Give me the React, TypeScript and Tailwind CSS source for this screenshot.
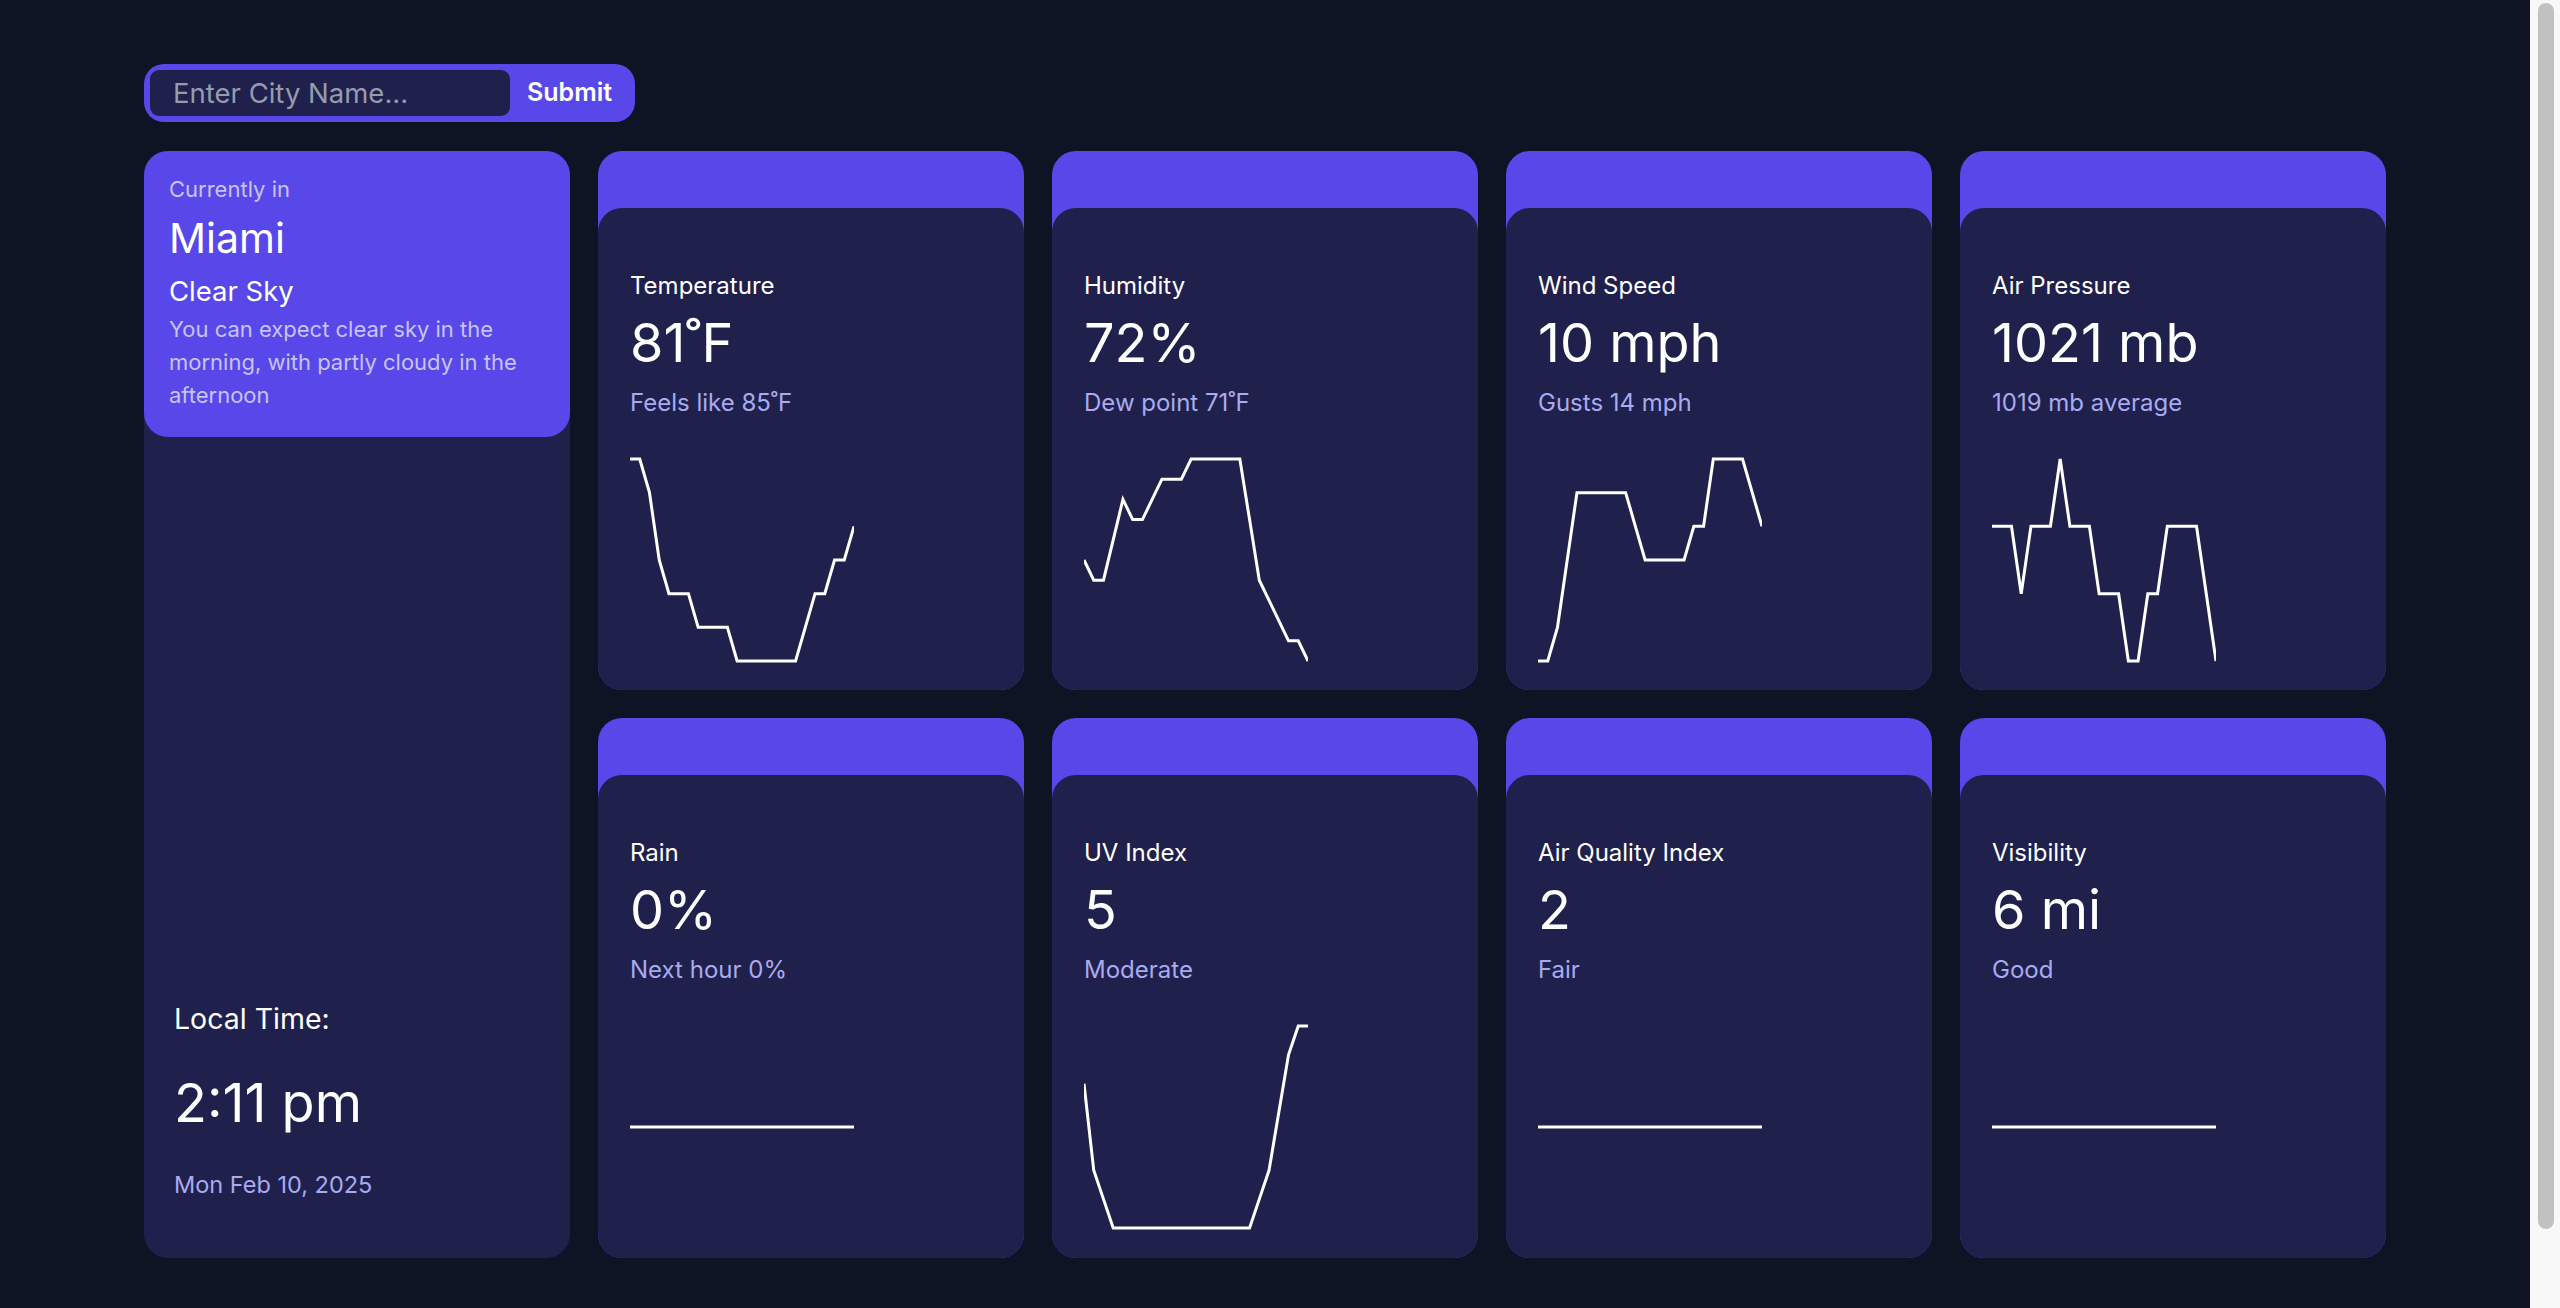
import React from "react";

const temp = [81, 81, 80, 78, 77, 77, 77, 76, 76, 76, 76, 75, 75, 75, 75, 75, 75, 75, 76, 77, 77, 78, 78, 79];
const hum = [67, 66, 66, 68, 70, 69, 69, 70, 71, 71, 71, 72, 72, 72, 72, 72, 72, 69, 66, 65, 64, 63, 63, 62];
const wind = [4, 4, 5, 7, 9, 9, 9, 9, 9, 9, 8, 7, 7, 7, 7, 7, 8, 8, 10, 10, 10, 10, 9, 8];
const pres = [1021, 1021, 1021, 1020, 1021, 1021, 1021, 1022, 1021, 1021, 1021, 1020, 1020, 1020, 1019, 1019, 1020, 1020, 1021, 1021, 1021, 1021, 1020, 1019];
const uv = [5, 2, 1, 0, 0, 0, 0, 0, 0, 0, 0, 0, 0, 0, 0, 0, 0, 0, 1, 2, 4, 6, 7, 7];
const flat = new Array(24).fill(0);

function Chart({ data }: { data: number[] }) {
  const W = 224;
  const H = 208;
  const pad = 3;
  const R = 202;
  const min = Math.min(...data);
  const max = Math.max(...data);
  const pts = data
    .map((v, i) => {
      const x = (i * W) / (data.length - 1);
      const y = max === min ? pad + R / 2 : pad + ((max - v) / (max - min)) * R;
      return `${x.toFixed(2)},${y.toFixed(2)}`;
    })
    .join(" ");
  return (
    <svg width={W} height={H} className="mt-[37px] block">
      <polyline points={pts} fill="none" stroke="white" strokeWidth={3} />
    </svg>
  );
}

function Card({ label, value, sub, data }: { label: string; value: string; sub: string; data: number[] }) {
  return (
    <div className="flex rounded-3xl bg-[#5848e9] pt-[57px]">
      <div className="flex flex-1 flex-col rounded-3xl bg-[#1f204c] px-[32px] pt-[62px]">
        <div className="text-[24px] leading-[32px] text-white">{label}</div>
        <div className="mt-[14px] text-[54px] leading-[54px] text-white">{value}</div>
        <div className="mt-[17px] text-[24px] leading-[32px] text-[#a8abef]">{sub}</div>
        <Chart data={data} />
      </div>
    </div>
  );
}

export default function App() {
  return (
    <div className="flex h-screen overflow-hidden bg-[#0e1424] font-[family-name:Inter,'Noto_Sans',sans-serif]">
      <main className="min-w-0 flex-1 overflow-hidden">
        <div className="px-[144px] pb-[144px] pt-[64px]">
          <form className="flex h-[58px] w-[491px] rounded-[20px] bg-[#5848e9] p-[6px]" onSubmit={(e) => e.preventDefault()}>
            <input
              type="text"
              placeholder="Enter City Name..."
              className="h-full w-[360px] rounded-[9px] bg-[#1f204c] pl-[23px] text-[27.5px] text-white outline-none placeholder:text-[#959cad]"
            />
            <button type="submit" className="flex-1 text-[25px] font-semibold text-white">
              Submit
            </button>
          </form>

          <div className="mt-[29px] grid grid-cols-[repeat(5,426px)] grid-rows-[539px_540px] gap-[28px]">
            <div className="row-span-2 flex flex-col rounded-3xl bg-[#1f204c]">
              <div className="h-[286px] rounded-3xl bg-[#5848e9] px-[25px] pt-[22px]">
                <div className="text-[22px] leading-[33px] text-[#c6c3f8]">Currently in</div>
                <div className="mt-[8px] text-[41px] leading-[49px] text-white">Miami</div>
                <div className="mt-[10px] text-[27.5px] leading-[36px] text-white">Clear Sky</div>
                <div className="mt-[4px] text-[22px] leading-[33px] text-[#c6c3f8]">
                  You can expect clear sky in the morning, with partly cloudy in the afternoon
                </div>
              </div>
              <div className="mt-auto px-[30px] pb-[57px]">
                <div className="text-[28.5px] leading-[36px] text-white">Local Time:</div>
                <div className="mt-[39px] text-[54px] leading-[54px] text-white">2:11 pm</div>
                <div className="mt-[39px] text-[23.5px] leading-[32px] text-[#a8abef]">Mon Feb 10, 2025</div>
              </div>
            </div>

            <Card label="Temperature" value="81˚F" sub="Feels like 85˚F" data={temp} />
            <Card label="Humidity" value="72%" sub="Dew point 71˚F" data={hum} />
            <Card label="Wind Speed" value="10 mph" sub="Gusts 14 mph" data={wind} />
            <Card label="Air Pressure" value="1021 mb" sub="1019 mb average" data={pres} />

            <Card label="Rain" value="0%" sub="Next hour 0%" data={flat} />
            <Card label="UV Index" value="5" sub="Moderate" data={uv} />
            <Card label="Air Quality Index" value="2" sub="Fair" data={flat} />
            <Card label="Visibility" value="6 mi" sub="Good" data={flat} />
          </div>
        </div>
      </main>
      <div className="flex w-[30px] shrink-0 bg-[#f8f8f8] pb-[79px] pl-[8px] pr-[6px] pt-[3px]" aria-hidden="true">
        <div className="flex-1 rounded-full bg-[#c1c1c1]" />
      </div>
    </div>
  );
}
